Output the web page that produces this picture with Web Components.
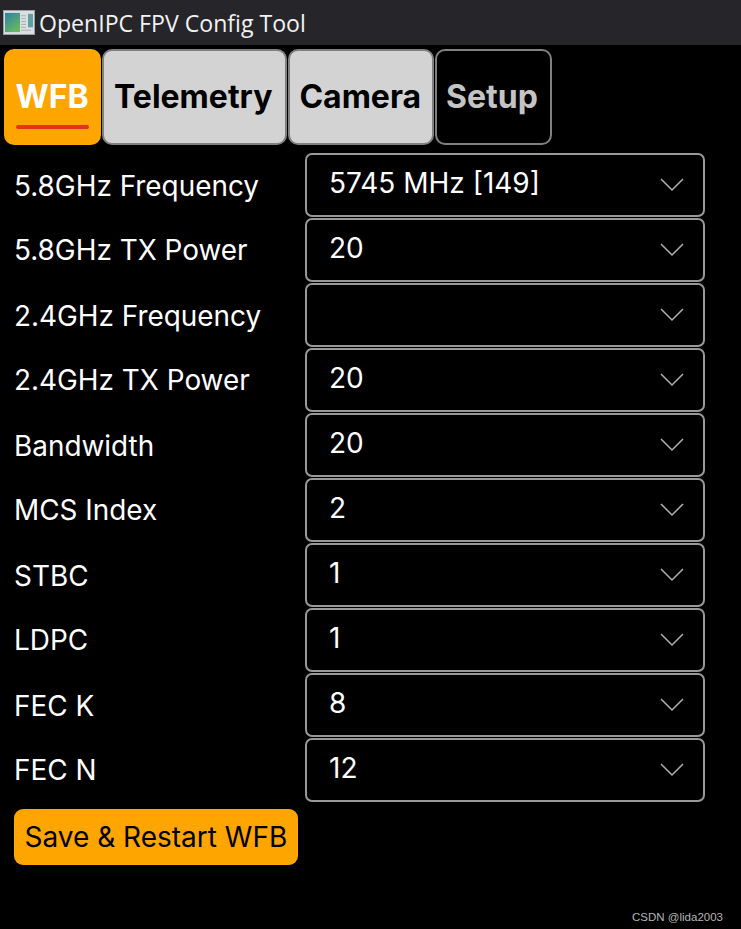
<!DOCTYPE html>
<html><head><meta charset="utf-8"><style>
html,body{margin:0;padding:0;background:#000;width:741px;height:929px;overflow:hidden}
body{font-family:Inter,sans-serif;position:relative}
</style></head><body>
<template id="t-bar"><style>
:host{display:flex;align-items:center;height:45px;background:#26262a;color:#f2f2f2;box-sizing:border-box;padding-left:3px;gap:4px;font:23.1px "Open Sans",sans-serif}
svg{display:block;margin-top:-1px}
</style>
<svg width="32" height="25" viewBox="0 0 32 26" preserveAspectRatio="none"><rect x="0" y="0" width="32" height="26" fill="#dcdfe2"/><rect x="0.5" y="0.5" width="31" height="25" fill="none" stroke="#9a9ea3"/><defs><linearGradient id="g" x1="0" y1="0" x2="0.6" y2="1"><stop offset="0" stop-color="#2f7fa8"/><stop offset="1" stop-color="#66b85f"/></linearGradient></defs><rect x="2" y="3" width="15" height="20" fill="url(#g)"/><rect x="25" y="4" width="5" height="14" fill="#5f9fa0"/><path d="M18 6h5M18 9h5M18 12h5M18 15h5M18 18h5M18 21h10" stroke="#a9adb2" stroke-width="1"/></svg>
<slot></slot></template>

<template id="t-tabs"><style>
:host{display:flex;padding:4px 0 0 4px;gap:1px}
</style><slot></slot></template>

<template id="t-tab"><style>
:host{display:block;box-sizing:border-box;height:96px;border:2px solid #808080;border-radius:10px;background:#d3d3d3;color:#000;font:700 32px/1 Inter,sans-serif;padding:0 var(--pr,10.5px) 0 9.5px;position:relative}
span{display:flex;height:100%;align-items:center}
:host([state=active]){background:#ffa500;border-color:#ffa500;color:#fff}
:host([state=dark]){background:#000;color:#c4c4c4}
i{display:none;position:absolute;left:10px;right:10px;bottom:14px;height:4px;border-radius:2px;background:#e8301e}
:host([state=active]) i{display:block}
</style><span><slot></slot></span><i></i></template>

<template id="t-form"><style>
:host{display:flex;flex-direction:column;gap:1px;padding:8px 0 0 15px}
</style><slot></slot></template>

<template id="t-row"><style>
:host{display:flex;align-items:center;height:64px;color:#fff;font:27.9px/1 Inter,sans-serif}
.l{width:290px;flex:none;padding-top:4px;margin-left:-1px;margin-right:1px}
:host(:nth-child(even)) .l{padding-top:2px}
.s{box-sizing:border-box;width:400px;height:64px;border:2px solid #999;border-radius:7px;display:flex;align-items:center;justify-content:space-between;padding:0 19px 0 22px}
.v{margin-top:-4px;font-size:28px}
svg{display:block}
</style><div class="l"><slot></slot></div><div class="s"><span class="v"></span><svg width="24" height="14" viewBox="0 0 24 14"><path d="M1 1L12 12L23 1" fill="none" stroke="#b0b0b0" stroke-width="1.5"/></svg></div></template>

<template id="t-btn"><style>
:host{display:inline-flex;align-items:center;height:56px;box-sizing:border-box;padding:0 10.5px;margin:7px 0 0 14px;border-radius:9px;background:#ffa500;color:#000;font:28px/1 Inter,sans-serif}
</style><slot></slot></template>

<template id="t-mark"><style>
:host{display:block;position:absolute;right:18px;bottom:6px;color:#b5b5b5;font:11.5px "Liberation Sans",sans-serif}
</style><slot></slot></template>

<app-bar>OpenIPC FPV Config Tool</app-bar>
<tab-strip>
<tab-item state="active" style="--pr:10.8px">WFB</tab-item>
<tab-item style="--pr:12.5px">Telemetry</tab-item>
<tab-item style="--pr:10.5px">Camera</tab-item>
<tab-item state="dark" style="--pr:12.5px">Setup</tab-item>
</tab-strip>
<form-list>
<form-row value="5745 MHz [149]">5.8GHz Frequency</form-row>
<form-row value="20">5.8GHz TX Power</form-row>
<form-row value="">2.4GHz Frequency</form-row>
<form-row value="20">2.4GHz TX Power</form-row>
<form-row value="20">Bandwidth</form-row>
<form-row value="2">MCS Index</form-row>
<form-row value="1">STBC</form-row>
<form-row value="1">LDPC</form-row>
<form-row value="8">FEC K</form-row>
<form-row value="12">FEC N</form-row>
</form-list>
<save-button>Save &amp; Restart WFB</save-button>
<water-mark>CSDN @lida2003</water-mark>
<script>
function def(name,tid,init){
  customElements.define(name,class extends HTMLElement{
    constructor(){super();const r=this.attachShadow({mode:'open'});r.appendChild(document.getElementById(tid).content.cloneNode(true));}
    connectedCallback(){if(init)init(this);}
  });
}
def('app-bar','t-bar');
def('tab-strip','t-tabs');
def('tab-item','t-tab');
def('form-list','t-form');
def('form-row','t-row',e=>{e.shadowRoot.querySelector('.v').textContent=e.getAttribute('value')||'';});
def('save-button','t-btn');
def('water-mark','t-mark');
</script>
</body></html>
